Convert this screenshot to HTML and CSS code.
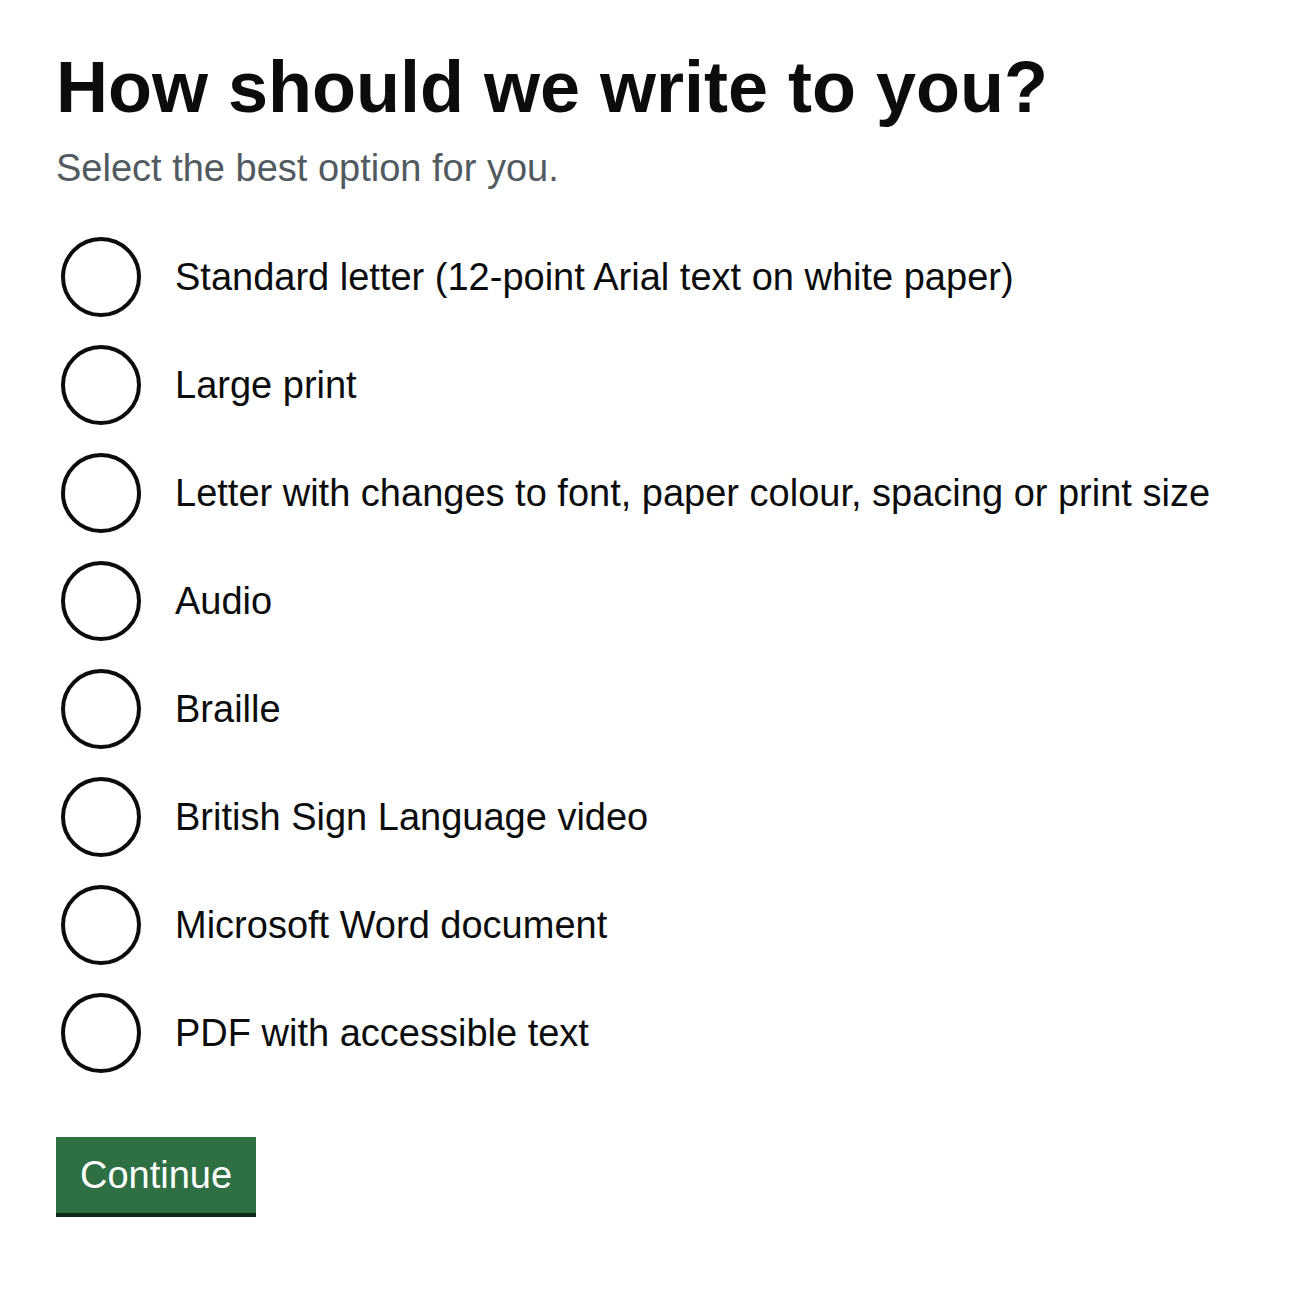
FILE: index.html
```html
<!DOCTYPE html>
<html lang="en">
<head>
<meta charset="utf-8">
<title>How should we write to you?</title>
<link rel="stylesheet" href="styles.css">
</head>
<body>
<main class="page">
  <h1 class="title">How should we write to you?</h1>
  <p class="hint">Select the best option for you.</p>
  <div class="radios">
    <label class="radio"><span class="circle"></span><span class="label">Standard letter (12-point Arial text on white paper)</span></label>
    <label class="radio"><span class="circle"></span><span class="label">Large print</span></label>
    <label class="radio"><span class="circle"></span><span class="label">Letter with changes to font, paper colour, spacing or print size</span></label>
    <label class="radio"><span class="circle"></span><span class="label">Audio</span></label>
    <label class="radio"><span class="circle"></span><span class="label">Braille</span></label>
    <label class="radio"><span class="circle"></span><span class="label">British Sign Language video</span></label>
    <label class="radio"><span class="circle"></span><span class="label">Microsoft Word document</span></label>
    <label class="radio"><span class="circle"></span><span class="label">PDF with accessible text</span></label>
  </div>
  <button class="button" type="button">Continue</button>
</main>
</body>
</html>
```

FILE: styles.css
```css
html, body {
  margin: 0;
  padding: 0;
  background: #ffffff;
}
body {
  font-family: "Liberation Sans", Arial, sans-serif;
  color: #0b0c0c;
}
.page {
  padding: 44px 56px 40px 56px;
}
.title {
  margin: 0;
  font-size: 72px;
  line-height: 86px;
  font-weight: 700;
  letter-spacing: 0;
}
.hint {
  margin: 14px 0 0 0;
  font-size: 38px;
  line-height: 48px;
  color: #505a5f;
}
.radios {
  display: flex;
  flex-direction: column;
  gap: 28px;
  margin-top: 45px;
}
.radio {
  display: flex;
  align-items: center;
  gap: 34px;
  min-height: 80px;
  padding-left: 5px;
}
.circle {
  flex: none;
  width: 80px;
  height: 80px;
  box-sizing: border-box;
  border: 4px solid #0b0c0c;
  border-radius: 50%;
  background: #fff;
}
.label {
  font-size: 38px;
  line-height: 48px;
}
.button {
  display: block;
  margin-top: 64px;
  width: 200px;
  height: 76px;
  padding: 0;
  border: 0;
  background: #2e7043;
  color: #ffffff;
  font-family: "Liberation Sans", Arial, sans-serif;
  font-size: 38px;
  line-height: 1;
  box-shadow: 0 4px 0 #0c2c17;
  cursor: pointer;
}
```
